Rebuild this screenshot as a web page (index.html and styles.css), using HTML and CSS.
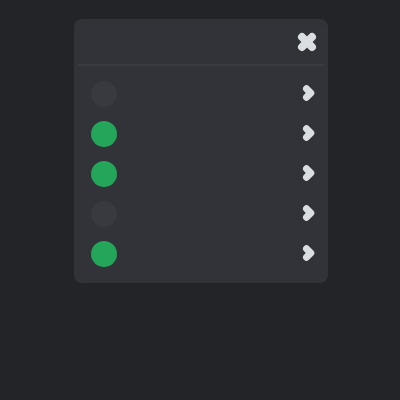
FILE: index.html
```html
<!DOCTYPE html>
<html lang="en">
  <head>
    <meta charset="UTF-8" />
    <title>Status list</title>
    <link rel="stylesheet" href="styles.css">
  </head>
  <body>
    <div class="panel">
      <div class="panelHeader">
        <svg class="closeIcon" width="22" height="22" viewBox="0 0 22 22">
          <line x1="6" y1="6" x2="16" y2="16" />
          <line x1="16" y1="6" x2="6" y2="16" />
        </svg>
      </div>
      <div class="divider"></div>
      <ul class="list">
        <li class="row"><span class="dot off"></span><svg class="chev" width="14" height="18" viewBox="0 0 14 18"><polyline points="4.5,4.8 8.8,9 4.5,13.2" /></svg></li>
        <li class="row"><span class="dot on"></span><svg class="chev" width="14" height="18" viewBox="0 0 14 18"><polyline points="4.5,4.8 8.8,9 4.5,13.2" /></svg></li>
        <li class="row"><span class="dot on"></span><svg class="chev" width="14" height="18" viewBox="0 0 14 18"><polyline points="4.5,4.8 8.8,9 4.5,13.2" /></svg></li>
        <li class="row"><span class="dot off"></span><svg class="chev" width="14" height="18" viewBox="0 0 14 18"><polyline points="4.5,4.8 8.8,9 4.5,13.2" /></svg></li>
        <li class="row"><span class="dot on"></span><svg class="chev" width="14" height="18" viewBox="0 0 14 18"><polyline points="4.5,4.8 8.8,9 4.5,13.2" /></svg></li>
      </ul>
    </div>
  </body>
</html>
```

FILE: styles.css
```css
* {
  margin: 0;
  padding: 0;
  box-sizing: border-box;
}

body {
  background-color: #232428;
  font-family: "Noto Sans", sans-serif;
  height: 400px;
}

.panel {
  width: 254px;
  height: 264px;
  margin: 19px 0 0 74px;
  background-color: #313338;
  border-radius: 8px;
  display: flex;
  flex-direction: column;
}

.panelHeader {
  height: 45px;
  display: flex;
  justify-content: flex-end;
  align-items: center;
  padding: 0 10px 0 0;
}

.closeIcon line {
  stroke: #dbdee1;
  stroke-width: 8;
  stroke-linecap: round;
}

.divider {
  height: 2px;
  margin: 0 4px;
  background-color: #3a3c41;
}

.list {
  list-style: none;
  padding-top: 8px;
}

.row {
  height: 40px;
  display: flex;
  align-items: center;
  justify-content: space-between;
  padding: 0 12px 0 17px;
}

.chev {
  margin-top: -2px;
}

.dot {
  width: 26px;
  height: 26px;
  border-radius: 50%;
}

.dot.on {
  background-color: #23a55a;
}

.dot.off {
  background-color: #383a40;
}

.chev polyline {
  fill: none;
  stroke: #dbdee1;
  stroke-width: 7;
  stroke-linecap: round;
  stroke-linejoin: round;
}
```
